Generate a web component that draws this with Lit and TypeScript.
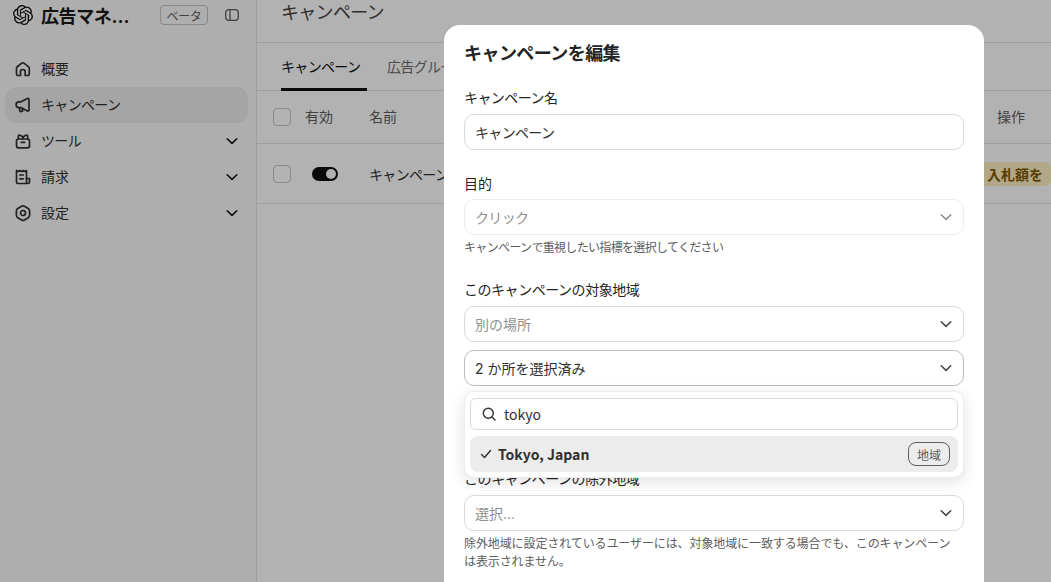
import { LitElement, html, css, svg } from "lit";
import { customElement } from "lit/decorators.js";

const chev = () => html`<svg class="chev" width="16" height="16" viewBox="0 0 16 16" fill="none" stroke="currentColor" stroke-width="1.5" stroke-linecap="round" stroke-linejoin="round"><path d="M3.2 5.800l4.800 4.600 4.800-4.600"/></svg>`;

const navIcon = (p: unknown) => html`<svg class="ni" width="20" height="20" viewBox="0 0 20 20" fill="none" stroke="currentColor" stroke-width="1.7" stroke-linecap="round" stroke-linejoin="round">${p}</svg>`;

const icons = {
  home: svg`<path d="M7.600 16.500H5.200a1.700 1.700 0 0 1-1.700-1.700V9.200c0-.6.3-1.100.7-1.400l4.600-3.600a1.800 1.800 0 0 1 2.200 0l4.600 3.600c.4.300.7.800.7 1.400v5.600a1.700 1.700 0 0 1-1.700 1.700h-2.400v-3.600a2.400 2.400 0 0 0-4.800 0z"/>`,
  mega: svg`<path d="M8 6.800l6.400-3.300c.8-.4 1.600.2 1.600 1v10.400c0 .8-.8 1.400-1.600 1L8 12.600H6a2.900 2.900 0 0 1 0-5.800z"/><path d="M6.300 12.800l.6 3c.1.600.6.900 1.200.7l1.600-.5-.5-2"/>`,
  tool: svg`<rect x="3.500" y="8" width="13" height="8.800" rx="2"/><path d="M8.300 11.300h3.400"/><path d="M5.300 8V5.400c0-1 1-1.700 1.900-1.200L10 6l2.800-1.800c.9-.5 1.900.2 1.900 1.200V8"/><path d="M10 6v2"/>`,
  bill: svg`<path d="M13.500 11.500V3.500l-1.600 1-1.600-1-1.700 1-1.600-1-1.600 1-1.900-1v11.300c0 1 .8 1.700 1.700 1.700h9"/><path d="M13.500 11.500h3v3.500a1.500 1.500 0 0 1-3 0z"/><path d="M6.800 8h3.400M6.800 11.800h3.400"/>`,
  gear: svg`<path d="M8.600 3.300a2.800 2.800 0 0 1 2.800 0l3.800 2.200c.9.500 1.400 1.400 1.400 2.400v4.400c0 1-.5 1.900-1.400 2.400l-3.800 2.200a2.800 2.800 0 0 1-2.800 0l-3.800-2.200a2.800 2.800 0 0 1-1.400-2.400V7.900c0-1 .5-1.900 1.400-2.400z"/><circle cx="10" cy="10" r="2.500"/>`,
};

@customElement("app-root")
export class AppRoot extends LitElement {
  static styles = css`
    :host { display: block; width: 1051px; height: 582px; overflow: hidden; position: relative; background: #fff; color: #0d0d0d;
      font-family: Inter, "Noto Sans CJK JP", "Noto Sans", sans-serif; font-size: 14px; }
    * { box-sizing: border-box; }
    .k { letter-spacing: -0.67px; }
    .app { display: flex; height: 582px; }
    .side { width: 257px; flex: none; background: #f9f9f9; border-right: 1px solid #e3e3e3; padding: 0 5px; }
    .brand { display: flex; align-items: center; height: 30px; padding-left: 8px; }
    .logo { flex: none; }
    .bname { width: 103px; margin-left: 8px; font-size: 18px; font-weight: 700; letter-spacing: -0.4px; white-space: nowrap; overflow: hidden; text-overflow: ellipsis; color: #1a1a1a; }
    .beta { margin-left: 16px; width: 48px; height: 20px; border: 1px solid #c4c4c4; border-radius: 4px; font-size: 12px; letter-spacing: -0.4px; color: #5d5d5d; display: flex; align-items: center; justify-content: center; flex: none; }
    .tog { margin-left: 17px; flex: none; color: #5d5d5d; }
    nav { margin-top: 21px; display: flex; flex-direction: column; }
    .item { height: 36px; display: flex; align-items: center; padding: 0 8px; border-radius: 12px; width: 243px; gap: 8px; color: #303030; }
    .item.on { background: #ececec; }
    .item span { flex: 1; line-height: 20px; padding-bottom: 1px; }
    .item .chev { color: #0d0d0d; }
    .main { flex: 1; min-width: 0; display: flex; flex-direction: column; }
    .phead { height: 43px; border-bottom: 1px solid #e3e3e3; padding: 1px 0 0 24px; font-size: 18px; letter-spacing: -0.7px; line-height: 24px; color: #454545; flex: none; }
    .tabs { height: 48px; border-bottom: 1px solid #e3e3e3; display: flex; gap: 20px; padding-left: 24px; flex: none; }
    .tab { height: 48px; width: 86px; padding-top: 14px; line-height: 20px; border-bottom: 3px solid #0d0d0d; color: #0d0d0d; }
    .tab.off { border: none; color: #6e6e6e; width: auto; white-space: nowrap; }
    .row { display: flex; align-items: center; border-bottom: 1px solid #e3e3e3; padding-left: 16px; flex: none; color: #5d5d5d; }
    .thead { height: 53px; padding-bottom: 2px; }
    .thead .cb { margin-top: 2px; }
    .tbody { height: 60px; }
    .cb { width: 18px; height: 18px; border: 1px solid #c4c4c4; border-radius: 4px; flex: none; }
    .c1 { margin-left: 14px; width: 64px; }
    .c2 { width: 628px; white-space: nowrap; }
    .sw { width: 26px; height: 14px; border-radius: 7px; background: #0d0d0d; margin-left: 21px; margin-right: 31px; flex: none; display: flex; align-items: center; justify-content: flex-end; padding-right: 2px; }
    .sw i { width: 10px; height: 10px; border-radius: 50%; background: #fff; }
    .name2 { width: 628px; color: #303030; white-space: nowrap; }
    .warn { background: #fff0c2; color: #7d5a00; font-weight: 700; height: 24px; padding: 0 8px; border-radius: 6px; display: flex; align-items: center; white-space: nowrap; flex: none; }
    .scrim { position: absolute; inset: 0; background: rgba(0,0,0,.3); }
    .modal { position: absolute; left: 444px; top: 25px; width: 540px; height: 600px; background: #fff; border-radius: 16px; padding: 17px 20px; }
    h2 { margin: 0; font-size: 18px; line-height: 24px; font-weight: 700; color: #242424; letter-spacing: -0.56px; }
    .lab { line-height: 20px; color: #242424; }
    .l1 { margin-top: 22px; letter-spacing: -0.57px; }
    .l2 { margin-top: 24px; }
    .l3 { margin-top: 23px; letter-spacing: -0.46px; }
    .l4 { margin-top: 83px; letter-spacing: -0.46px; }
    .f { margin-top: 6px; height: 36px; border: 1px solid #d9d9d9; border-radius: 10px; display: flex; align-items: center; padding: 0 9px 0 10px; color: #303030; }
    .f span { flex: 1; }
    .f.ph { color: #8f8f8f; }
    .f.dis { border-color: #ececec; color: #8f8f8f; margin-top: 5px; }
    .f .chev { color: #454545; }
    .f.dis .chev { color: #8f8f8f; }
    .f.strong { border-color: #bdbdbd; margin-top: 8px; }
    .f.ex { margin-top: 6px; }
    .hint { font-size: 12px; line-height: 18px; color: #5d5d5d; margin-top: 3px; }
    .h1 { letter-spacing: -0.67px; margin-top: 4px; }
    .h2 { letter-spacing: -0.1px; margin-top: 4px; }
    .drop { position: absolute; left: 20px; top: 366px; width: 500px; height: 87px; background: #fff; border: 1px solid #ececec; border-radius: 10px; padding: 6px 5px; box-shadow: 0 4px 16px rgba(0,0,0,.12); }
    .srch { height: 32px; border: 1px solid #d9d9d9; border-radius: 6px; display: flex; align-items: center; gap: 7px; padding-left: 10px; color: #303030; font-family: "Noto Sans CJK JP", sans-serif; }
    .opt { margin-top: 6px; height: 36px; background: #ececec; border-radius: 8px; display: flex; align-items: center; padding: 0 8px 0 9px; gap: 5px; font-weight: 500; color: #303030; font-family: "Noto Sans CJK JP", sans-serif; }
    .opt span { flex: 1; font-weight: 700; }
    .tag { height: 24px; width: 42px; border: 1px solid #5d5d5d; border-radius: 8px; font-size: 12px; font-weight: 400; color: #5d5d5d; display: flex; align-items: center; justify-content: center; flex: none; }
  `;

  render() {
    return html`
      <div class="app">
        <aside class="side">
          <div class="brand">
            <svg class="logo" width="20" height="20" viewBox="0 0 24 24" fill="#0d0d0d"><path d="M22.282 9.821a5.985 5.985 0 0 0-.516-4.91 6.046 6.046 0 0 0-6.51-2.9A6.065 6.065 0 0 0 4.981 4.18a5.985 5.985 0 0 0-3.998 2.9 6.046 6.046 0 0 0 .743 7.097 5.98 5.98 0 0 0 .51 4.911 6.051 6.051 0 0 0 6.515 2.9A5.985 5.985 0 0 0 13.26 24a6.056 6.056 0 0 0 5.772-4.206 5.99 5.99 0 0 0 3.997-2.9 6.056 6.056 0 0 0-.747-7.073zM13.26 22.43a4.476 4.476 0 0 1-2.876-1.04l.141-.081 4.779-2.758a.795.795 0 0 0 .392-.681v-6.737l2.02 1.168a.071.071 0 0 1 .038.052v5.583a4.504 4.504 0 0 1-4.494 4.494zM3.6 18.304a4.47 4.47 0 0 1-.535-3.014l.142.085 4.783 2.759a.771.771 0 0 0 .78 0l5.843-3.369v2.332a.08.08 0 0 1-.033.062L9.74 19.95a4.5 4.5 0 0 1-6.14-1.646zM2.34 7.896a4.485 4.485 0 0 1 2.366-1.973V11.6a.766.766 0 0 0 .388.676l5.815 3.355-2.02 1.168a.076.076 0 0 1-.071 0l-4.83-2.786A4.504 4.504 0 0 1 2.34 7.872zm16.597 3.855l-5.833-3.387L15.119 7.2a.076.076 0 0 1 .071 0l4.83 2.791a4.494 4.494 0 0 1-.676 8.105v-5.678a.79.79 0 0 0-.407-.667zm2.01-3.023l-.141-.085-4.774-2.782a.776.776 0 0 0-.785 0L9.409 9.23V6.897a.066.066 0 0 1 .028-.061l4.83-2.787a4.5 4.5 0 0 1 6.68 4.66zm-12.64 4.135l-2.02-1.164a.08.08 0 0 1-.038-.057V6.075a4.5 4.5 0 0 1 7.375-3.453l-.142.08L8.704 5.46a.795.795 0 0 0-.393.681zm1.097-2.365l2.602-1.5 2.607 1.5v2.999l-2.597 1.5-2.607-1.5z"/></svg>
            <div class="bname">広告マネージャー</div>
            <div class="beta">ベータ</div>
            <svg class="tog" width="14" height="12" viewBox="0 0 14 12" fill="none" stroke="currentColor" stroke-width="1.300"><rect x=".7" y=".7" width="12.600" height="10.600" rx="3"/><path d="M5 .7v10.600"/></svg>
          </div>
          <nav>
            <div class="item">${navIcon(icons.home)}<span>概要</span></div>
            <div class="item on">${navIcon(icons.mega)}<span class="k">キャンペーン</span></div>
            <div class="item">${navIcon(icons.tool)}<span class="k">ツール</span>${chev()}</div>
            <div class="item">${navIcon(icons.bill)}<span>請求</span>${chev()}</div>
            <div class="item">${navIcon(icons.gear)}<span>設定</span>${chev()}</div>
          </nav>
        </aside>
        <main class="main">
          <div class="phead">キャンペーン</div>
          <div class="tabs"><div class="tab k">キャンペーン</div><div class="tab off k">広告グループ</div></div>
          <div class="row thead"><div class="cb"></div><div class="c1">有効</div><div class="c2">名前</div><div>操作</div></div>
          <div class="row tbody"><div class="cb"></div><div class="sw"><i></i></div><div class="name2 k">キャンペーン</div><div class="warn">入札額を</div></div>
        </main>
      </div>
      <div class="scrim"></div>
      <div class="modal">
        <h2>キャンペーンを編集</h2>
        <div class="lab l1">キャンペーン名</div>
        <div class="f"><span class="k">キャンペーン</span></div>
        <div class="lab l2">目的</div>
        <div class="f dis"><span class="k">クリック</span>${chev()}</div>
        <div class="hint h1">キャンペーンで重視したい指標を選択してください</div>
        <div class="lab l3">このキャンペーンの対象地域</div>
        <div class="f ph"><span>別の場所</span>${chev()}</div>
        <div class="f strong"><span>2 か所を選択済み</span>${chev()}</div>
        <div class="lab l4">このキャンペーンの除外地域</div>
        <div class="f ph ex"><span>選択...</span>${chev()}</div>
        <div class="hint h2">除外地域に設定されているユーザーには、対象地域に一致する場合でも、このキャンペーン<br>は表示されません。</div>
        <div class="drop">
          <div class="srch"><svg width="16" height="16" viewBox="0 0 16 16" fill="none" stroke="currentColor" stroke-width="1.400" stroke-linecap="round"><circle cx="7.300" cy="7.300" r="5"/><path d="M11 11l3 3"/></svg>tokyo</div>
          <div class="opt"><svg width="14" height="14" viewBox="0 0 14 14" fill="none" stroke="currentColor" stroke-width="1.400" stroke-linecap="round" stroke-linejoin="round"><path d="M2.500 7.500l3 3 6-7"/></svg><span>Tokyo, Japan</span><div class="tag">地域</div></div>
        </div>
      </div>
    `;
  }
}
